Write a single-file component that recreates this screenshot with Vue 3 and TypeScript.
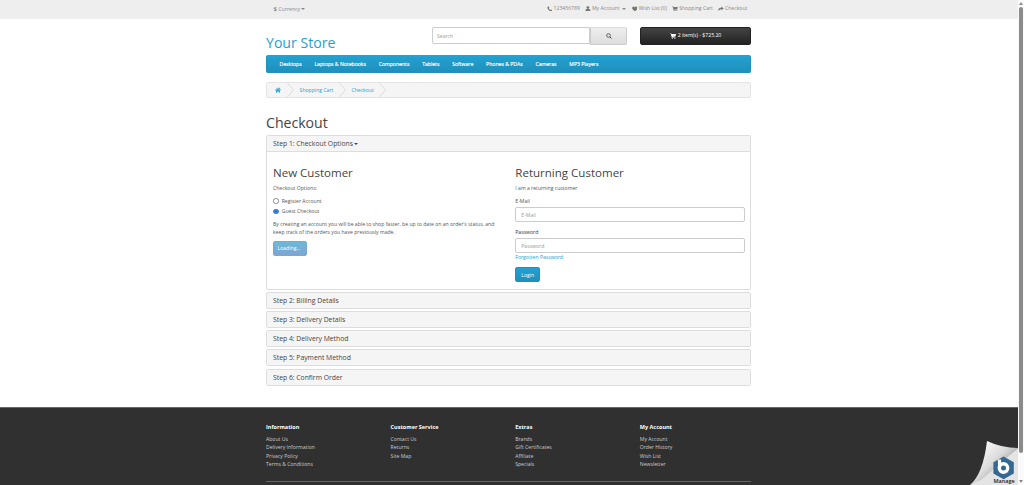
<script setup lang="ts">
interface FooterColumn {
  title: string
  links: string[]
}

const menu: string[] = ['Desktops', 'Laptops & Notebooks', 'Components', 'Tablets', 'Software', 'Phones & PDAs', 'Cameras', 'MP3 Players']
const crumbs: string[] = ['Shopping Cart', 'Checkout']
const steps: string[] = [
  'Step 2: Billing Details',
  'Step 3: Delivery Details',
  'Step 4: Delivery Method',
  'Step 5: Payment Method',
  'Step 6: Confirm Order',
]
const footer: FooterColumn[] = [
  { title: 'Information', links: ['About Us', 'Delivery Information', 'Privacy Policy', 'Terms & Conditions'] },
  { title: 'Customer Service', links: ['Contact Us', 'Returns', 'Site Map'] },
  { title: 'Extras', links: ['Brands', 'Gift Certificates', 'Affiliate', 'Specials'] },
  { title: 'My Account', links: ['My Account', 'Order History', 'Wish List', 'Newsletter'] },
]
</script>

<template>
  <div class="page">
    <div class="topbar">
      <div class="container topbar-row">
        <span class="currency"><b>$</b> Currency <i class="caret"></i></span>
        <div class="top-links">
          <span class="top-link phone">
            <svg viewBox="0 0 12 12"><path d="M1 2.2 3 .6 5 3.6 3.8 4.9Q4.9 7.1 7.1 8.2L8.4 7l3 2-1.6 2.2C6.500 12.500-.500 6 1 2.200Z" /></svg>123456789
          </span>
          <span class="top-link account">
            <svg viewBox="0 0 12 12"><circle cx="6" cy="3.300" r="3" /><path d="M1 12V9q0-3 3-3h4q3 0 3 3v3Z" /></svg>My Account<i class="caret"></i>
          </span>
          <span class="top-link wish">
            <svg viewBox="0 0 12 12"><path d="M6 11.500.8 6.300C-1 3 2.500-1 6 2.500 9.500-1 13 3 11.200 6.300Z" /></svg>Wish List (0)
          </span>
          <span class="top-link shopping">
            <svg viewBox="0 0 12 12"><path d="M0 1h2.500l.4 1.200H12L11 7 4.200 7.800l.2.900H11v1H3.500L1.800 2H0Z" /><circle cx="4.500" cy="11" r="1" /><circle cx="10" cy="11" r="1" /></svg>Shopping Cart
          </span>
          <span class="top-link">
            <svg viewBox="0 0 12 12"><path d="M7 1l5 4-5 4V6.600C4 6.500 2 7.500 2 11-1 6 2 3.400 7 3.400Z" /></svg>Checkout
          </span>
        </div>
      </div>
    </div>

    <div class="container">
      <header class="header">
        <div class="logo">Your Store</div>
        <div class="search">
          <div class="search-input">Search</div>
          <div class="search-button">
            <svg viewBox="0 0 12 12"><circle cx="5" cy="5" r="3.700" fill="none" stroke="#444" stroke-width="1.600" /><path d="m8 8 3 3" stroke="#444" stroke-width="2" /></svg>
          </div>
        </div>
        <div class="cart">
          <svg viewBox="0 0 12 12"><path d="M0 1h2.500l.4 1.200H12L11 7 4.200 7.800l.2.900H11v1H3.500L1.800 2H0Z" /><circle cx="4.500" cy="11" r="1" /><circle cx="10" cy="11" r="1" /></svg>
          2 item(s) - $725.20
        </div>
      </header>

      <nav class="menu">
        <span v-for="item in menu" :key="item">{{ item }}</span>
      </nav>

      <div class="breadcrumb">
        <span class="crumb home">
          <svg class="house" viewBox="0 0 12 12"><path d="M6 1 0 6.200l.7.800L6 2.500 11.300 7l.7-.8-1.800-1.600V1.500H8.700v1.800ZM2 7v4h3V8h2v3h3V7L6 3.600Z" /></svg>
          <svg class="chevron" viewBox="0 0 8 16"><path d="M.5 0 7.500 8 .5 16" /></svg>
        </span>
        <span v-for="crumb in crumbs" :key="crumb" class="crumb">
          {{ crumb }}
          <svg class="chevron" viewBox="0 0 8 16"><path d="M.5 0 7.500 8 .5 16" /></svg>
        </span>
      </div>

      <h1>Checkout</h1>

      <section class="panel open">
        <div class="panel-heading">Step 1: Checkout Options <i class="caret"></i></div>
        <div class="panel-body">
          <div class="column">
            <h2>New Customer</h2>
            <p class="intro">Checkout Options:</p>
            <label class="option"><span class="radio"></span>Register Account</label>
            <label class="option"><span class="radio checked"></span>Guest Checkout</label>
            <p class="note">By creating an account you will be able to shop faster, be up to date on an order's status, and<br />keep track of the orders you have previously made.</p>
            <button class="button loading">Loading...</button>
          </div>
          <div class="column">
            <h2>Returning Customer</h2>
            <p class="intro">I am a returning customer</p>
            <div class="label">E-Mail</div>
            <div class="field">E-Mail</div>
            <div class="label second">Password</div>
            <div class="field">Password</div>
            <a class="forgot">Forgotten Password</a>
            <button class="button login">Login</button>
          </div>
        </div>
      </section>

      <section v-for="step in steps" :key="step" class="panel">
        <div class="panel-heading">{{ step }}</div>
      </section>
    </div>

    <footer class="footer">
      <div class="container">
        <div class="footer-columns">
          <div v-for="column in footer" :key="column.title" class="footer-column">
            <h5>{{ column.title }}</h5>
            <div v-for="link in column.links" :key="link" class="footer-link">{{ link }}</div>
          </div>
        </div>
      </div>
    </footer>

    <div class="curl">
      <svg viewBox="0 0 48 45">
        <defs>
          <linearGradient id="fold" gradientUnits="userSpaceOnUse" x1="10" y1="8" x2="30" y2="28">
            <stop offset="0" stop-color="#f8f8f8" />
            <stop offset="0.65" stop-color="#dcdcdc" />
            <stop offset="0.88" stop-color="#c4c4c4" />
            <stop offset="1" stop-color="#a8a8a8" />
          </linearGradient>
        </defs>
        <path d="M48 8v37H0Z" fill="#e4e4e4" />
        <path d="M17 1Q32 8 48 8L11 40 0 45Q13 34 17 1Z" fill="url(#fold)" />
        <path d="m33.600 16.500 10.200 5.700v11.200l-10.200 5.800-10.200-5.800V22.200Z" fill="#326891" />
        <path d="M29.500 19.500v8" stroke="#fff" stroke-width="3.200" />
        <circle cx="33.500" cy="28" r="4.200" fill="#326891" stroke="#fff" stroke-width="3.400" />
      </svg>
      <span>Manage</span>
    </div>

    <div class="scrollbar">
      <i class="arrow up"></i>
      <div class="thumb"></div>
      <i class="arrow down"></i>
    </div>
  </div>
</template>

<style>
body {
  overflow: hidden;
}
</style>

<style scoped>
.page {
  position: relative;
  width: 1024px;
  height: 485px;
  overflow: hidden;
  background: #fff;
  color: #555;
  font: 5.11px/8.5px "Open Sans", "Noto Sans", sans-serif;
}
.page * {
  box-sizing: border-box;
}
.container {
  width: 485.400px;
  margin-left: 266px;
}
.caret {
  display: inline-block;
  width: 0;
  height: 0;
  border: 0 solid transparent;
  border-width: 2px 2px 0;
  border-top-color: currentColor;
  vertical-align: 1px;
}
.topbar {
  height: 19px;
  width: 1018px;
  background: #eee;
  color: #888;
}
.topbar-row {
  display: flex;
  justify-content: space-between;
  padding: 4px 4px 0 7.500px;
}
.currency {
  padding-top: 0.600px;
}
.currency b {
  font-size: 6px;
  margin-right: 0.300px;
}
.currency .caret {
  margin-left: -0.500px;
}
.top-links {
  display: flex;
}
.top-link {
  display: flex;
  align-items: center;
  height: 9px;
  margin-left: 5px;
  white-space: nowrap;
}
.top-link svg {
  width: 5.800px;
  height: 5.800px;
  margin-right: 1.300px;
  fill: #777;
}
.account .caret {
  margin: 1px 0.800px 0 2px;
  border-width: 2px 2px 0;
}
.header {
  display: flex;
  height: 36px;
}
.logo {
  width: 166px;
  padding-top: 15px;
  color: #23a1d1;
  font-size: 14.100px;
  line-height: 18px;
}
.search {
  display: flex;
  width: 195px;
  height: 18px;
  margin: 8px 13px 0 0;
}
.search-input {
  width: 158px;
  height: 17px;
  padding-left: 4px;
  border: 1px solid #ccc;
  border-radius: 2px 0 0 2px;
  color: #999;
  line-height: 16px;
}
.search-button {
  display: flex;
  justify-content: center;
  align-items: center;
  flex: 1;
  border: 1px solid #ccc;
  border-top-color: #ddd;
  border-radius: 0 2px 2px 0;
  background: linear-gradient(#eee, #ddd);
}
.search-button svg {
  width: 6px;
  height: 6px;
}
.cart {
  display: flex;
  align-items: center;
  justify-content: center;
  width: 111.400px;
  height: 18px;
  margin-top: 8px;
  padding-bottom: 1px;
  border: 1px solid #222;
  border-radius: 2px;
  background: linear-gradient(#444, #222);
  color: #fff;
}
.cart svg {
  width: 6px;
  height: 6px;
  margin-right: 1.500px;
  fill: #fff;
}
.menu {
  display: flex;
  align-items: center;
  height: 18px;
  padding-left: 12.500px;
  border: 1px solid #1f90bb;
  border-top-color: #23a1d1;
  border-radius: 2px;
  background: linear-gradient(#23a1d1, #1f90bb);
  color: #fff;
  -webkit-text-stroke: 0.15px #fff;
}
.menu span {
  margin-right: 12.800px;
  line-height: 16px;
}
.breadcrumb {
  display: flex;
  height: 16px;
  margin-top: 9px;
  border: 1px solid #e4e4e4;
  border-radius: 2px;
  background: #f5f5f5;
  color: #23a1d1;
  line-height: 14px;
}
.crumb {
  display: flex;
  align-items: center;
  margin-left: 5.800px;
}
.crumb .chevron {
  width: 8px;
  height: 16px;
  margin: -1px 0 -1px 4.300px;
  fill: none;
  stroke: #ddd;
}
.crumb.home {
  margin-left: 8px;
}
.house {
  width: 6px;
  height: 6px;
  fill: #23a1d1;
}
.home .chevron {
  margin-left: 4.800px;
}
h1 {
  margin: 15px 0 2px;
  color: #444;
  font-size: 14.100px;
  font-weight: 400;
  line-height: 20px;
}
.panel {
  height: 17px;
  margin-bottom: 2.150px;
  border: 1px solid #ddd;
  border-radius: 2px;
  background: #fff;
}
.panel.open {
  height: 155px;
  margin-bottom: 2px;
}
.panel-heading {
  height: 15px;
  padding-left: 6px;
  background: #f5f5f5;
  color: #444;
  font-size: 6.800px;
  line-height: 15px;
}
.open .panel-heading {
  height: 16px;
  border-bottom: 1px solid #ddd;
}
.open .caret {
  margin-left: -0.700px;
}
.panel-body {
  display: flex;
  padding: 13px 6px 0;
}
.column {
  flex: none;
  width: 242.300px;
}
.column:last-child {
  width: 229.800px;
}
h2 {
  margin: 0;
  color: #444;
  font-size: 11.540px;
  font-weight: 400;
  line-height: 16px;
}
.intro {
  margin: 2.500px 0 4px;
}
.option {
  display: flex;
  align-items: center;
  height: 10.300px;
}
.option .radio {
  width: 5.500px;
  height: 5.500px;
  margin-right: 3.200px;
  border: 1px solid #888;
  border-radius: 50%;
}
.option .radio.checked {
  border-color: #2a83dd;
  background: #0a66c8;
  box-shadow: inset 0 0 0 0.300px #b9dcfa;
}
.note {
  margin: 3.200px 0 4.200px;
  white-space: nowrap;
}
.button {
  display: block;
  padding: 0;
  border: 1px solid #1f90bb;
  border-radius: 2px;
  background: linear-gradient(#23a1d1, #1f90bb);
  color: #fff;
  font: inherit;
}
.loading {
  width: 34px;
  height: 15px;
  padding-right: 2px;
  border-color: #7ba8d0;
  background: linear-gradient(#6cb9d9, #7da5d3);
}
.label {
  height: 11px;
  padding-top: 0.500px;
}
.label.second {
  margin-top: 5.200px;
  height: 10.500px;
  color: #333;
}
.field {
  height: 15px;
  padding-left: 5px;
  border: 1px solid #ccc;
  border-radius: 2px;
  color: #999;
  line-height: 14px;
}
.forgot {
  display: block;
  color: #23a1d1;
}
.login {
  width: 25px;
  height: 15px;
  margin-top: 6.300px;
}
.footer {
  width: 1018px;
  height: 78px;
  margin-top: 21.250px;
  padding-top: 15.500px;
  border-top: 1px solid #666;
  background: #303030;
  color: #ccc;
}
.footer-columns {
  display: flex;
  height: 58.500px;
  border-bottom: 1px solid #666;
}
.footer-column {
  flex: none;
  width: 124.600px;
}
.footer-column:last-child {
  width: 111px;
}
h5 {
  margin: 0 0 2.300px;
  color: #fff;
  font: 700 5.500px/9px "Open Sans", sans-serif;
}
.curl {
  position: absolute;
  left: 970px;
  top: 440px;
  width: 48px;
  height: 45px;
}
.curl svg {
  display: block;
  width: 48px;
  height: 45px;
}
.curl span {
  position: absolute;
  left: 23.500px;
  top: 37px;
  color: #222;
  font-size: 5.500px;
  font-weight: 600;
}
.scrollbar {
  position: absolute;
  right: 0;
  top: 0;
  display: flex;
  flex-direction: column;
  align-items: center;
  width: 6px;
  height: 485px;
  padding: 2px 0;
  background: #fafafa;
}
.thumb {
  width: 3.500px;
  height: 446px;
  margin-top: 2px;
  border-radius: 2px;
  background: #8b8b8b;
}
.arrow {
  border: 2px solid transparent;
}
.arrow.up {
  border-top: 0;
  border-bottom: 3px solid #8b8b8b;
}
.arrow.down {
  margin-top: auto;
  border-bottom: 0;
  border-top: 3px solid #8b8b8b;
}
</style>
